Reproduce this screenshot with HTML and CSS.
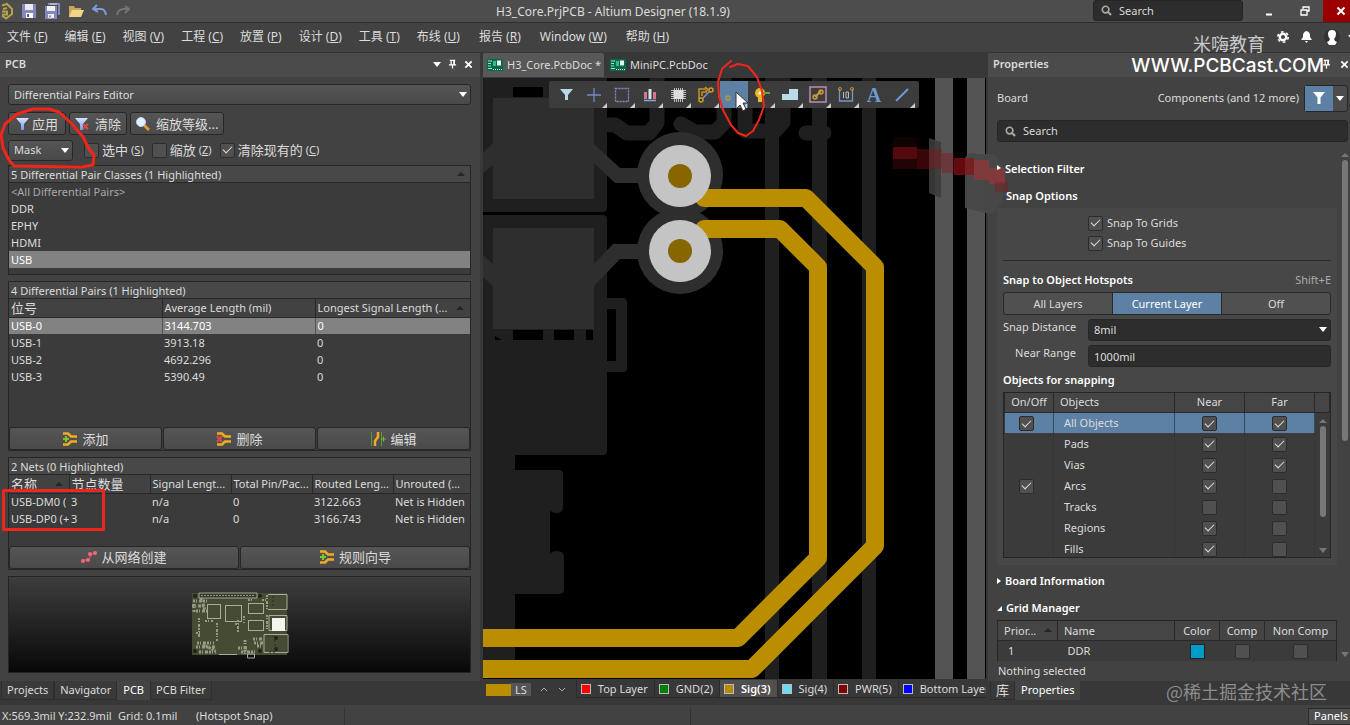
FILE: index.html
```html
<!DOCTYPE html>
<html lang="zh-CN">
<head>
<meta charset="utf-8">
<title>H3_Core.PrjPCB - Altium Designer (18.1.9)</title>
<link rel="stylesheet" href="styles.css">
</head>
<body>
<svg class="defs" aria-hidden="true">
  <symbol id="magnifier" viewBox="0 0 12 12"><circle cx="5" cy="5" r="3.6" fill="none" stroke="#aaa" stroke-width="1.8"/><path d="M7.6 7.6L11 11" stroke="#aaa" stroke-width="2.2"/></symbol>
  <symbol id="pin" viewBox="0 0 10 10"><path d="M2 1h6M3.5 1v5M6.5 1v5M7 1v5M1 6h8M5 6v4" stroke="#fff" stroke-width="1.4" fill="none"/></symbol>
  <symbol id="cross" viewBox="0 0 10 10"><path d="M1.5 1.5l7 7M8.5 1.5l-7 7" stroke="#fff" stroke-width="2" fill="none"/></symbol>
  <symbol id="pcbdoc" viewBox="0 0 16 12"><rect width="16" height="12" fill="#07694b"/><path d="M1 2h4M1 4.500h3M1 7h3M1 9.500h4" stroke="#8fe8bf"/><path d="M6 10.500h9" stroke="#d7f5e6" stroke-dasharray="1 1"/><rect x="6" y="2" width="3" height="5" fill="#39b98a"/><rect x="10" y="1.500" width="4" height="5" fill="#e4f5ec"/></symbol>
  <symbol id="pair" viewBox="0 0 16 16"><path d="M1 2.500h5l3 3h6M1 13.500h5l3-3h6" stroke="#f2ac22" stroke-width="2.500" fill="none"/></symbol>
  <symbol id="plus" viewBox="0 0 8 8"><path d="M4 1v6M1 4h6" stroke="#79c637" stroke-width="2"/></symbol>
  <linearGradient id="blueglass" x2="0" y2="1"><stop stop-color="#d6e5ff"/><stop offset="1" stop-color="#7197e6"/></linearGradient>
</svg>

<header class="titlebar">
  <div class="quick">
    <svg width="14" height="18" viewBox="0 0 14 18"><path d="M2 3.500L7 2l5 5v5l-6 4.500-4-3M3 7l4-1M2 9.500h5v3H2" fill="none" stroke="#b7a24a" stroke-width="2"/></svg>
    <button aria-label="Save"><svg width="14" height="14" viewBox="0 0 14 14"><path d="M0 0h14v14H0z" fill="#8587bd"/><path d="M3 0h8v6H3z" fill="#e9eaf5"/><path d="M4 9h7v5H4z" fill="#fff"/><path d="M5 10h2v3H5z" fill="#555b95"/></svg></button>
    <button aria-label="Save all"><svg width="16" height="16" viewBox="0 0 16 16"><path d="M4 1h11v11" fill="none" stroke="#8587bd" stroke-width="2"/><path d="M1 3h12v13H1z" fill="#8587bd"/><path d="M3 3h8v5H3zM4 11h6v4H4z" fill="#f0f0f8"/><path d="M5 12h2v3H5zM6 1h7" fill="#555b95" stroke="#ddd"/></svg></button>
    <button aria-label="Open"><svg width="16" height="14" viewBox="0 0 16 14"><path d="M1 13V2h5l1 2h6v3" fill="#c9a45b"/><path d="M1 13L4 6h12l-3 7z" fill="#f2d489"/></svg></button>
    <button aria-label="Undo"><svg width="16" height="14" viewBox="0 0 16 14"><path d="M5 1L1 5l5 3M1.500 5H9q4 0 5 6" fill="none" stroke="#7c9dd6" stroke-width="2"/></svg></button>
    <button aria-label="Redo"><svg width="14" height="12" viewBox="0 0 14 12"><path d="M9 1l4 3-4 4M13 4H8Q2 4 1 10" fill="none" stroke="#747474" stroke-width="2"/></svg></button>
  </div>
  <h1>H3_Core.PrjPCB - Altium Designer (18.1.9)</h1>
  <div class="titleright">
    <label class="search top"><svg width="11" height="11"><use href="#magnifier"/></svg><input type="text" placeholder="Search" aria-label="Search"></label>
    <div class="winbtns">
    <button aria-label="Minimize"><svg width="8" height="10"><path d="M1 8.500h6" stroke="#fff" stroke-width="2"/></svg></button>
    <button aria-label="Restore"><svg width="10" height="10"><path d="M3 3V1h6v4H7M1 4h6v5H1z" fill="none" stroke="#fff" stroke-width="1.300"/></svg></button>
    <button class="close" aria-label="Close"><svg width="10" height="10"><use href="#cross"/></svg></button>
    </div>
  </div>
</header>

<nav class="menubar">
  <button>文件 (<u>F</u>)</button><button>编辑 (<u>E</u>)</button><button>视图 (<u>V</u>)</button><button>工程 (<u>C</u>)</button><button>放置 (<u>P</u>)</button><button>设计 (<u>D</u>)</button><button>工具 (<u>T</u>)</button><button>布线 (<u>U</u>)</button><button>报告 (<u>R</u>)</button><button>Window (<u>W</u>)</button><button>帮助 (<u>H</u>)</button>
  <div class="account">
    <button aria-label="Settings"><svg width="12" height="12" viewBox="0 0 12 12"><circle cx="6" cy="6" r="3.200" fill="none" stroke="#fff" stroke-width="2.400"/><circle cx="6" cy="6" r="5.200" fill="none" stroke="#fff" stroke-width="1.600" stroke-dasharray="2.700 2.740"/></svg></button>
    <button aria-label="Notifications"><svg width="11" height="12" viewBox="0 0 11 12"><path d="M5.500 0q4 1 3.500 6l2 3H0l2-3Q1.500 1 5.500 0zM4 10h3l-1.500 2z" fill="#fff"/></svg></button>
    <button aria-label="User"><svg width="16" height="16" viewBox="0 0 16 16"><circle cx="8" cy="8" r="8" fill="#333"/><path d="M8 1q4 0 4 4 0 3-2 5l1 2 2 1-2 3H5l-2-3 2-1 1-2Q4 8 4 5q0-4 4-4z" fill="#fff"/></svg></button>
    <i class="down"></i>
  </div>
</nav>

<main class="work">
  <aside class="left">
    <div class="panelhead"><h2>PCB</h2><i class="down"></i><svg width="9" height="10"><use href="#pin"/></svg><svg width="9" height="9"><use href="#cross"/></svg></div>
    <div class="leftbody">
      <div class="pick"><select aria-label="Mode"><option>Differential Pairs Editor</option></select></div>
      <div class="actions">
        <button class="btn"><svg width="13" height="12" viewBox="0 0 13 12"><path d="M0 0h13L8 6v6H5V6z" fill="url(#blueglass)"/></svg>应用</button>
        <button class="btn"><svg width="14" height="12" viewBox="0 0 14 12"><path d="M0 0h13L8 6v6H5V6z" fill="url(#blueglass)"/><path d="M8 6l5 5M13 6l-5 5" stroke="#dd4b3e" stroke-width="2"/></svg>清除</button>
        <button class="btn"><svg width="14" height="14" viewBox="0 0 14 14"><path d="M8 8l5 5" stroke="#dc9a3c" stroke-width="3"/><circle cx="5" cy="5" r="4.500" fill="#e4f2ff" stroke="#bdd3ef"/></svg>缩放等级...</button>
      </div>
      <div class="options">
        <div class="pick mask"><select aria-label="Mask"><option>Mask</option></select></div>
        <label><input type="checkbox">选中 <small>(<u>S</u>)</small></label>
        <label><input type="checkbox">缩放 <small>(<u>Z</u>)</small></label>
        <label><input type="checkbox" checked>清除现有的 <small>(<u>C</u>)</small></label>
      </div>

      <section class="list l1">
        <h3>5 Differential Pair Classes (1 Highlighted)<i class="up"></i></h3>
        <ul><li class="dim">&lt;All Differential Pairs&gt;</li><li>DDR</li><li>EPHY</li><li>HDMI</li><li class="on">USB</li></ul>
      </section>

      <section class="list l2">
        <h3>4 Differential Pairs (1 Highlighted)</h3>
        <table class="grid pairs">
          <colgroup><col class="third"><col class="third"><col></colgroup>
          <thead><tr><th class="cjk">位号</th><th>Average Length (mil)</th><th>Longest Signal Length (...<i class="up"></i></th></tr></thead>
          <tbody>
            <tr class="on"><td>USB-0</td><td>3144.703</td><td>0</td></tr>
            <tr><td>USB-1</td><td>3913.18</td><td>0</td></tr>
            <tr><td>USB-2</td><td>4692.296</td><td>0</td></tr>
            <tr><td>USB-3</td><td>5390.49</td><td>0</td></tr>
          </tbody>
        </table>
        <div class="foot">
          <button class="btn"><svg width="16" height="16"><use href="#pair" width="16" height="16"/><use href="#plus" y="4" width="8" height="8"/></svg>添加</button>
          <button class="btn"><svg width="16" height="16"><use href="#pair" width="16" height="16"/><path d="M1 5l5 6M6 5l-5 6" stroke="#d94a48" stroke-width="2"/></svg>删除</button>
          <button class="btn"><svg width="16" height="16" viewBox="0 0 16 16"><path d="M1.500 1v14M11.500 1v14" stroke="#5f9c37"/><path d="M8 1v5L5 10v5" stroke="#f2ac22" stroke-width="2.500" fill="none"/><path d="M11 8h5M13.500 5.500v5" stroke="#79b637"/></svg>编辑</button>
        </div>
      </section>

      <section class="list l3">
        <h3>2 Nets (0 Highlighted)</h3>
        <table class="grid nets">
          <colgroup><col class="n1"><col class="n2"><col class="n3"><col class="n3"><col class="n3"><col></colgroup>
          <thead><tr><th class="cjk">名称<i class="up"></i></th><th class="cjk">节点数量</th><th>Signal Lengt...</th><th>Total Pin/Pac...</th><th>Routed Leng...</th><th>Unrouted (...</th></tr></thead>
          <tbody>
            <tr><td>USB-DM0 (</td><td>3</td><td>n/a</td><td>0</td><td>3122.663</td><td>Net is Hidden</td></tr>
            <tr><td>USB-DP0 (+</td><td>3</td><td>n/a</td><td>0</td><td>3166.743</td><td>Net is Hidden</td></tr>
          </tbody>
        </table>
        <div class="foot">
          <button class="btn"><svg width="16" height="12" viewBox="0 0 16 12"><path d="M2 9h5l4-6h4" stroke="#c9495a" stroke-width="1.500" fill="none"/><g fill="#f2697a"><circle cx="2" cy="10" r="2"/><circle cx="7" cy="9" r="2"/><circle cx="9" cy="3" r="2"/><circle cx="14" cy="2" r="2"/></g></svg>从网络创建</button>
          <button class="btn"><svg width="16" height="16"><use href="#pair" width="16" height="16"/><use href="#plus" y="4" width="8" height="8"/></svg>规则向导</button>
        </div>
      </section>

      <div class="preview">
        <svg width="98" height="68" viewBox="0 0 98 68">
          <path d="M1 1h95v62H1z" fill="#454c33"/>
          <path d="M8 1h58v5H8z" fill="#343a28" stroke="#a2a595"/>
          <path d="M10 3.500h54" stroke="#92967f" stroke-dasharray="2 1"/>
          <g fill="none" stroke="#a9ab9c"><rect x="16.500" y="12.500" width="13" height="14"/><rect x="34.500" y="13.500" width="16" height="16"/><rect x="57.500" y="11.500" width="15" height="10"/><rect x="57.500" y="28.500" width="15" height="10"/><path d="M77 2.500h19v15H77M78 23.500h18v15H78zM73 42.500h24v18H73zM56.500 62v4h7v-4z"/></g>
          <g fill="none" stroke="#969b85" stroke-width="3" stroke-dasharray="2 1 1 2 3 1"><path d="M2 9h14M1 14h12M5 19h11M3 12v8M10 6l4 12"/><path d="M8 26v20M26 31v18M5 41h5M14 29h8" stroke-width="2"/><path d="M6 51h17M5 55h20M8 60h17M12 52l14 8M47 56h10M50 60h14M54 48v14M62 47h9M63 51h10M66 54h6"/><path d="M44 32h6M47 28v13M53 24v7M57 8h5M71 8h6M76 3v14M76 23v14" stroke-width="2"/></g>
          <path d="M28 62.500h18" stroke="#a9ab9c"/>
          <g fill="#20231a"><circle cx="4" cy="4" r="2"/><circle cx="69" cy="4" r="2"/><circle cx="4" cy="59" r="2"/><circle cx="69" cy="59" r="2"/><circle cx="85" cy="46" r="2"/><circle cx="85" cy="57" r="2"/></g>
          <path d="M76 44h8v16h-8M82 4v12" fill="none" stroke="#282c20" stroke-dasharray="2 2"/>
          <path d="M81 26h13v13H81z" fill="#f4f4ee"/>
        </svg>
      </div>
    </div>
    <div class="tabs"><button>Projects</button><button>Navigator</button><button class="active">PCB</button><button>PCB Filter</button></div>
  </aside>

  <section class="editor">
    <div class="docs">
      <button class="active"><svg width="16" height="12"><use href="#pcbdoc"/></svg>H3_Core.PcbDoc *</button>
      <button><svg width="16" height="12"><use href="#pcbdoc"/></svg>MiniPC.PcbDoc</button>
    </div>
    <div class="canvas">
      <svg class="board" viewBox="483 78 503 601" preserveAspectRatio="xMinYMin slice">
        <path d="M483 78h503v601H483z" fill="#000"/>
        <g fill="#1f1f1f">
          <path d="M765 78h14v601h-14zM812 78h15v601h-15zM862 78h14v601h-14z"/>
          <path d="M483 78H607V208q0 4-4 4H483z"/>
          <path d="M483 215h120q4 0 4 4v79h16q4 0 4 4v66q0 4-4 4h-16v79q0 4-4 4h-88v15h44q4 0 4 4v32q0 7-6 7-7 0-7-4v46q0-4 7-4t7 6v32q0 5-5 5h-44v81h-32z"/>
        </g>
        <g fill="none" stroke="#1f1f1f" stroke-width="15" stroke-linejoin="round" stroke-linecap="round"><path d="M610 125h5l12 8h22l8-10V78M681 124l14 8h20l9-9V78M745 100v31h30l8-9V78M806 133h18"/></g>
        <path d="M513 87h30v10h-30zM607 309h9v52h-9zM513 330h30v10h-30zM554 330h20v10h-20zM586 330h7v10h-7zM495 336l7 4h-7z" fill="#000"/>
        <g fill="#2e2e2e">
          <path d="M493 98h101v101H493zM493 228h101v101H493zM483 153l10-10v22l-10 8zM483 255l10 9v22l-10-9zM594 144l26 24h24v15h-29l-21-20zM594 264l19-20h31v15h-24l-26 27z"/>
          <circle cx="680" cy="175" r="43"/><circle cx="680" cy="251" r="43"/>
        </g>
        <path d="M935 78h18v601h-18zM967 78h18v601h-18z" fill="#545454"/>
        <g fill="none" stroke="#bb8d00" stroke-width="18" stroke-linejoin="round" stroke-linecap="round"><path d="M704 198h102l69 69v279L752 669H470M704 229h76l38 38v291l-80 80H470"/></g>
        <g fill="#c4c4c4"><circle cx="680" cy="176" r="31"/><circle cx="680" cy="251" r="31"/></g>
        <g fill="#876600"><circle cx="680" cy="176" r="12"/><circle cx="680" cy="251" r="12"/></g>
      </svg>
      <div class="toolbar">
        <button aria-label="Filter"><svg viewBox="0 0 28 26"><path d="M8 7h13l-5 6v5h-3v-5z" fill="#b9d8e4"/></svg></button>
        <button aria-label="Move"><svg viewBox="0 0 28 26"><path d="M14 6v14M7 13h14" stroke="#7488cc" stroke-width="1.300"/><path d="M27 26v-5l-5 5z" fill="#ccc"/></svg></button>
        <button aria-label="Select area"><svg viewBox="0 0 28 26"><path d="M7.500 6.500h13v13h-13z" fill="none" stroke="#858bd0" stroke-width="1.300" stroke-dasharray="2 1"/><path d="M27 26v-5l-5 5z" fill="#ccc"/></svg></button>
        <button aria-label="Align"><svg viewBox="0 0 28 26"><path d="M8 18.500h12" stroke="#8ba5d8" stroke-width="1.500"/><path d="M8 10h3v7H8zM17 10h3v7h-3z" fill="#d77686"/><path d="M12.500 7h3v10h-3z" fill="#d4e3f0"/><path d="M27 26v-5l-5 5z" fill="#ccc"/></svg></button>
        <button aria-label="Component"><svg viewBox="0 0 28 26"><path d="M10.500 6v14M12.500 6v14M14.500 6v14M16.500 6v14M18.500 6v14M7 8.500h15M7 10.500h15M7 12.500h15M7 14.500h15M7 16.500h15" stroke="#bcbcbc"/><path d="M9.500 8h10v9h-10z" fill="#dcdcdc"/><path d="M27 26v-5l-5 5z" fill="#ccc"/></svg></button>
        <button aria-label="Route"><svg viewBox="0 0 28 26"><path d="M7 17V7h7M10 14v-4h5M13 5l3 2.500-3 2.500" fill="none" stroke="#c39424" stroke-width="1.500"/><path d="M10 17l8-8" stroke="#8391ce" stroke-width="1.500"/><g fill="#393939" stroke="#d19c20" stroke-width="1.500"><circle cx="9" cy="18" r="2"/><circle cx="19" cy="8" r="2"/></g><path d="M27 26v-5l-5 5z" fill="#ccc"/></svg></button>
        <button class="active" aria-label="Route differential pair"><svg viewBox="0 0 28 26"><circle cx="8" cy="16" r="2" fill="none" stroke="#b99b43" stroke-width="1.300"/><path d="M27 26v-5l-5 5z" fill="#ccc"/></svg></button>
        <button aria-label="Via"><svg viewBox="0 0 28 26"><circle cx="12" cy="11" r="5" fill="#e8b72a"/><path d="M12 11v9" stroke="#e8b72a" stroke-width="4"/><path d="M14 11h8" stroke="#65a832" stroke-width="2"/><circle cx="12" cy="11" r="1.500" fill="#fff"/><path d="M27 26v-5l-5 5z" fill="#ccc"/></svg></button>
        <button aria-label="Polygon"><svg viewBox="0 0 28 26"><path d="M6 12h7V7h9v11H6z" fill="#b9dce8"/><path d="M27 26v-5l-5 5z" fill="#ccc"/></svg></button>
        <button aria-label="Room"><svg viewBox="0 0 28 26"><path d="M6 5h16v15H6z" fill="none" stroke="#c487b5" stroke-width="1.500"/><path d="M11 15l6-6" stroke="#b29855" stroke-width="2"/><g fill="none" stroke="#d19c20" stroke-width="1.500"><circle cx="11" cy="15" r="2"/><circle cx="17" cy="10" r="2"/></g><path d="M27 26v-5l-5 5z" fill="#ccc"/></svg></button>
        <button aria-label="Dimension"><svg viewBox="0 0 28 26"><path d="M7.500 7v12h13V7" fill="none" stroke="#7795c6" stroke-width="1.300"/><path d="M11.500 10v6M14 10h2.500v6H14z" fill="none" stroke="#bbb"/><g fill="none" stroke="#c39424"><circle cx="8" cy="7" r="1.500"/><circle cx="20" cy="7" r="1.500"/></g><path d="M27 26v-5l-5 5z" fill="#ccc"/></svg></button>
        <button class="letter" aria-label="Text">A</button>
        <button aria-label="Line"><svg viewBox="0 0 28 26"><path d="M8 19L20 7" stroke="#6c9bd4" stroke-width="2"/><path d="M27 26v-5l-5 5z" fill="#ccc"/></svg></button>
      </div>
    </div>
    <div class="layers">
      <button class="ls"><i></i><b>LS</b></button>
      <button class="chev" aria-label="Previous layer"><svg width="8" height="5"><path d="M1 4l3-3 3 3" fill="none" stroke="#aaa"/></svg></button>
      <button class="chev" aria-label="Next layer"><svg width="8" height="5"><path d="M1 1l3 3 3-3" fill="none" stroke="#aaa"/></svg></button>
      <button class="layer"><i class="red"></i>Top Layer</button><button class="layer"><i class="green"></i>GND(2)</button><button class="layer active"><i class="gold"></i>Sig(3)</button><button class="layer"><i class="cyan"></i>Sig(4)</button><button class="layer"><i class="maroon"></i>PWR(5)</button><button class="layer"><i class="blue"></i>Bottom Layer</button>
    </div>
  </section>

  <aside class="right">
    <div class="panelhead"><h2>Properties</h2><svg width="9" height="10"><use href="#pin"/></svg><svg width="9" height="9"><use href="#cross"/></svg></div>
    <div class="scope"><span>Board</span><span class="what">Components (and 12 more)</span><div class="split"><button class="blue" aria-label="Filter"><svg width="12" height="12" viewBox="0 0 12 12"><path d="M0 0h12L7.500 5.500V12h-3V5.500z" fill="#fff"/></svg></button><button aria-label="Filter options"><i class="down"></i></button></div></div>
    <label class="search wide"><svg width="11" height="11"><use href="#magnifier"/></svg><input type="text" placeholder="Search" aria-label="Search properties"></label>
    <div class="props">
      <h3 class="fold shut">Selection Filter</h3>
      <h3 class="fold plain">Snap Options</h3>
      <div class="snapbox">
        <div class="snaps">
          <label><input type="checkbox" checked>Snap To Grids</label>
          <label><input type="checkbox" checked>Snap To Guides</label>
        </div>
        <div class="hot"><h4>Snap to Object Hotspots</h4><span>Shift+E</span></div>
        <div class="seg"><button>All Layers</button><button class="active">Current Layer</button><button>Off</button></div>
        <div class="field"><label for="dist">Snap Distance</label><div class="pick dark"><select id="dist"><option>8mil</option></select></div></div>
        <div class="field"><label for="near">Near Range</label><input id="near" type="text" value="1000mil"></div>
        <h4 class="ofs">Objects for snapping</h4>
        <div class="objects">
          <table>
            <colgroup><col class="o1"><col><col class="o3"><col class="o3"><col class="o5"></colgroup>
            <thead><tr><th>On/Off</th><th class="name">Objects</th><th>Near</th><th>Far</th><th></th></tr></thead>
            <tbody>
              <tr class="on"><td><input type="checkbox" checked aria-label="All on"></td><td class="name">All Objects</td><td><input type="checkbox" checked aria-label="All near"></td><td><input type="checkbox" checked aria-label="All far"></td><td></td></tr>
              <tr><td></td><td class="name">Pads</td><td><input type="checkbox" checked aria-label="Pads near"></td><td><input type="checkbox" checked aria-label="Pads far"></td><td></td></tr>
              <tr><td></td><td class="name">Vias</td><td><input type="checkbox" checked aria-label="Vias near"></td><td><input type="checkbox" checked aria-label="Vias far"></td><td></td></tr>
              <tr><td><input type="checkbox" checked aria-label="Arcs on"></td><td class="name">Arcs</td><td><input type="checkbox" checked aria-label="Arcs near"></td><td><input type="checkbox" aria-label="Arcs far"></td><td></td></tr>
              <tr><td></td><td class="name">Tracks</td><td><input type="checkbox" aria-label="Tracks near"></td><td><input type="checkbox" aria-label="Tracks far"></td><td></td></tr>
              <tr><td></td><td class="name">Regions</td><td><input type="checkbox" checked aria-label="Regions near"></td><td><input type="checkbox" aria-label="Regions far"></td><td></td></tr>
              <tr><td></td><td class="name">Fills</td><td><input type="checkbox" checked aria-label="Fills near"></td><td><input type="checkbox" aria-label="Fills far"></td><td></td></tr>
            </tbody>
          </table>
          <div class="bar inner"><i class="up"></i><b></b><i class="down"></i></div>
        </div>
      </div>
      <h3 class="fold shut">Board Information</h3>
      <h3 class="fold open">Grid Manager</h3>
      <table class="gridman">
        <colgroup><col class="g1"><col><col class="g3"><col class="g3"><col class="g5"></colgroup>
        <thead><tr><th class="name">Prior...<i class="up"></i></th><th class="name">Name</th><th>Color</th><th>Comp</th><th>Non Comp</th></tr></thead>
        <tbody><tr><td class="name">1</td><td class="name">DDR</td><td><i class="chip"></i></td><td><input type="checkbox" aria-label="Comp"></td><td><input type="checkbox" aria-label="Non Comp"></td></tr></tbody>
      </table>
      <div class="bar outer"><i class="up"></i><b></b><i class="down"></i></div>
    </div>
    <p class="note">Nothing selected</p>
    <div class="tabs"><button class="lib">库</button><button class="active">Properties</button></div>
  </aside>
</main>

<footer class="status"><span class="pos">X:569.3mil Y:232.9mil</span><span class="gridsize">Grid: 0.1mil</span><span class="hs">(Hotspot Snap)</span><span class="cell"></span><span class="cell rest"></span><button>Panels</button></footer>

<svg class="marks" width="1350" height="725" viewBox="0 0 1350 725" aria-hidden="true">
  <path d="M929 138l12 4v56l-12-5z" fill="#3c3c3c" opacity=".9"/>
  <path d="M965 158q4-7 12-4h17l10 15v25q-4 16-14 20l-25-6z" fill="#484848" opacity=".95"/>
  <g fill="#8c1014"><path d="M893 137h24v10h-24z" opacity=".1"/><path d="M893 147h24v12h-24z" opacity=".6"/><path d="M893 159h24v10h-24z" opacity=".25"/><path d="M917 149h25v20h-25zM942 153h12v20h-12z" opacity=".4"/><path d="M954 158h20v17h-20z" opacity=".7"/><path d="M974 160h15v20h-15zM989 168h16v16h-16z" fill="#9a3438" opacity=".7"/><path d="M995 182h13v10h-13z" opacity=".35"/></g>
  <path d="M997 165l4 3-4 2z" fill="#fff"/>
  <g fill="none" stroke="#f0261c" stroke-width="3" stroke-linejoin="round" stroke-linecap="round">
    <path d="M90 151L83 137 71 123 59 112 49 109H33L17 114 5 124 1 135 3 148 9 160 14 166 82 167 93 165 94 155 89 149"/>
    <path stroke-width="2" d="M730 67l8-3 10 2 9 11 5 14 2 15-5 14-6 11-7 5-8-3-7-8-8-15-4-13-1-15 4-13 9-8"/>
    <rect x="3.500" y="490.500" width="100" height="39"/>
  </g>
  <path d="M736 92v17l4-4 3 6 3-2-3-6h5z" fill="#fff" stroke="#333"/>
</svg>
<div class="wm name">米嗨教育</div>
<div class="wm site">WWW.PCBCast.COM</div>
<div class="wm forum">@稀土掘金技术社区</div>
</body>
</html>
```
FILE: styles.css
```css
* { box-sizing: border-box; }
html, body { height: 100%; }
body {
  margin: 0; display: flex; flex-direction: column; overflow: hidden; position: relative;
  background: #424242; color: #dcdcdc;
  font: 11px/16px "Noto Sans", "Noto Sans CJK SC", sans-serif;
}
button, input, select { font: inherit; color: inherit; }
button { background: none; border: 0; padding: 0; display: flex; align-items: center; justify-content: center; white-space: nowrap; }
h1, h2, h3, h4, p, ul { margin: 0; padding: 0; font-size: 11px; font-weight: 400; list-style: none; }
table { border-collapse: collapse; table-layout: fixed; width: 100%; }
th, td { padding: 0; font-weight: 400; text-align: left; white-space: nowrap; overflow: hidden; }
svg { flex: none; display: block; }
.defs { position: absolute; width: 0; height: 0; }
.down { border: 4px solid transparent; border-top: 5px solid #fff; border-bottom: 0; }
.up { border: 4px solid transparent; border-bottom: 4px solid #242424; border-top: 0; }

input[type=checkbox] {
  appearance: none; margin: 0; width: 15px; height: 15px; flex: none; vertical-align: middle;
  background: #505050; border: 1px solid #2c2c2c; border-radius: 2px; display: inline-grid; place-items: center;
}
input[type=checkbox]:checked::before { content: ""; width: 8px; height: 4px; margin-bottom: 3px; border: solid #ddd; border-width: 0 0 1px 1px; transform: rotate(-45deg); }

.titlebar { display: grid; grid-template-columns: 4fr auto 5fr; height: 23px; background: #4d4d4d; border-bottom: 1px solid #2e2e2e; align-items: center; }
.titlebar h1 { font-size: 12px; padding-top: 2px; }
.quick { display: flex; align-items: center; gap: 8px; }
.titleright { display: flex; justify-content: flex-end; height: 22px; }
.winbtns { display: flex; margin-left: 8px; }
.winbtns button { width: 36px; }
.winbtns .close { width: 27px; background: #9b0000; padding-left: 8px; }
.search { display: flex; align-items: center; background: #2d2d2d; border: 1px solid #262626; border-radius: 3px; }
.search input { border: 0; background: none; width: 100%; padding: 0; outline: 0; }
.search input::placeholder { color: #d8d8d8; opacity: 1; }
.search.top { width: 150px; height: 21px; padding-left: 7px; gap: 7px; }

.menubar { height: 29px; display: flex; gap: 17px; padding: 0 0 1px 7px; background: #424242; font-size: 12px; }
.menubar > button:nth-child(n+9) { padding-left: 2px; }
.account { margin-left: auto; display: flex; align-items: center; gap: 12px; }
.account .down { margin: 0 -6px 0 -4px; }

.work { flex: 1; display: flex; min-height: 0; background: #383838; }
.left { flex: 0 0 480px; display: flex; flex-direction: column; background: #424242; border-top: 1px solid #333; min-width: 0; }
.panelhead { height: 24px; flex: none; background: #4b4b4b; display: flex; align-items: center; gap: 7px; padding: 0 7px 2px 5px; }
.panelhead h2 { font-weight: 600; margin-right: auto; }
.leftbody { flex: 1; padding: 7px 9px 8px 8px; display: flex; flex-direction: column; min-height: 0; }
.pick { position: relative; height: 21px; }
.pick::after { content: ""; position: absolute; right: 4px; top: 8px; border: 4px solid transparent; border-top: 5px solid #fff; border-bottom: 0; pointer-events: none; }
.pick select { appearance: none; width: 100%; height: 100%; padding: 0 5px; background: linear-gradient(#555, #494949); border: 1px solid #272727; border-radius: 3px; }
.actions { display: flex; gap: 3px; margin-top: 7px; }
.actions .btn { height: 23px; padding: 0 7px; }
.btn { gap: 3px; font-size: 13px; background: linear-gradient(#555, #4a4a4a); border: 1px solid #272727; border-radius: 3px; }
.actions .btn + .btn { padding: 0 5px; gap: 6px; }
.options { display: flex; align-items: center; gap: 8px; margin: 4px 0; height: 22px; font-size: 13px; }
.options label { display: flex; align-items: center; gap: 3px; }
.options small { font-size: 11px; }
.mask { width: 65px; font-size: 11px; margin-right: 3px; }
.list { border: 1px solid #262626; background: #3b3b3b; display: flex; flex-direction: column; min-height: 0; margin-bottom: 6px; }
.l1 { flex: 110 1 0; } .l2 { flex: 171 1 0; } .l3 { flex: 112 1 0; }
.list h3 { height: 17px; flex: none; line-height: 17px; padding: 0 5px 0 2px; background: #484848; border-bottom: 1px solid #282828; display: flex; align-items: center; justify-content: space-between; }
.list li { height: 17px; line-height: 17px; padding-left: 2px; }
.dim { color: #a8a8a8; }
li.on, .grid tr.on { background: #828282; color: #fff; }
.grid th, .grid td { height: 17px; line-height: 16px; padding-left: 2px; }
.grid th { height: 18px; background: #424242; border-bottom: 1px solid #282828; position: relative; }
.grid th + th { border-left: 1px solid #282828; }
.grid tr.on td + td { border-left: 1px solid #555; }
.grid th .up { position: absolute; right: 6px; top: 7px; }
.grid .cjk { font-size: 13px; }
.third { width: 153px; }
.n1 { width: 60px; } .n2, .n3 { width: 81px; }
.foot { margin-top: auto; display: flex; gap: 1px; }
.foot .btn { flex: 1; height: 23px; gap: 4px; }
.preview { flex: 93 1 0; min-height: 0; padding-top: 4px; border: 1px solid #242424; background: linear-gradient(#3d3d3d, #080808); display: grid; place-items: center; }
.tabs { flex: none; height: 24px; background: #383838; display: flex; align-items: flex-start; padding-left: 1px; }
.tabs button { height: 19px; padding: 0 5px; border: 1px solid #2e2e2e; border-top: 0; background: #3a3a3a; }
.tabs .active { background: #444; border-color: #444; color: #fff; }

.editor { flex: 1; min-width: 0; display: flex; flex-direction: column; padding-left: 3px; }
.docs { height: 26px; display: flex; padding: 1px 0; }
.docs button { gap: 4px; padding: 0 3px 0 4px; margin-right: 2px; border-radius: 2px 2px 0 0; }
.docs .active { background: #585858; }
.canvas { flex: 1; min-height: 0; position: relative; overflow: hidden; background: #000; }
.board { width: 100%; height: 100%; }
.toolbar { position: absolute; left: 66px; top: 3px; display: flex; padding: 0 3px; background: #3c3c3c; border-radius: 2px; }
.toolbar button { width: 28px; height: 27px; }
.toolbar svg { width: 28px; height: 26px; }
.toolbar .active { background: #5d81a5; }
.toolbar .letter { font: bold 20px/24px "Liberation Serif", serif; color: #6c9bd4; }
.layers { flex: none; height: 26px; display: flex; align-items: flex-start; padding-top: 1px; overflow: hidden; }
.layers button { flex: none; }
.ls { height: 13px; margin: 3px 4px 0 3px; }
.ls i { width: 25px; height: 12px; background: #bb8d00; }
.ls b { font-weight: 400; line-height: 13px; padding: 0 4px; background: #555; }
.chev { width: 18px; height: 18px; }
.layer { height: 18px; padding: 0 6px 0 4px; gap: 7px; border: solid #2b2b2b; border-width: 0 1px 1px 0; }
.chev + .layer { margin-left: 5px; border-left-width: 1px; }
.layer i { width: 10px; height: 10px; border: 1px solid #bbb; }
.layer.active { background: #505050; font-weight: 600; color: #fff; }
.red { background: #f00; } .green { background: #008000; } .gold { background: #b58b00; } .cyan { background: #6adcf4; } .maroon { background: #800000; } .layer .blue { background: #00f; }

.right { flex: 0 0 362px; margin-left: 2px; display: flex; flex-direction: column; background: #424242; border-top: 1px solid #333; min-width: 0; }
.right .panelhead { padding-right: 1px; gap: 9px; }
.scope { display: flex; align-items: center; height: 28px; margin: 7px 2px 8px 9px; flex: none; }
.what { margin-left: auto; padding-right: 5px; }
.split { display: flex; border: 1px solid #262626; border-radius: 3px; background: #4c4c4c; height: 27px; }
.split button { width: 14px; }
.split .blue { width: 28px; background: #5d81a5; }
.search.wide { height: 22px; flex: none; margin: 0 2px 0 9px; padding-left: 7px; gap: 7px; }
.props { flex: 1; min-height: 0; overflow: hidden; position: relative; margin-top: 7px; padding: 10px 13px 0 9px; }
.fold { font-weight: 600; color: #fff; height: 20px; line-height: 20px; display: flex; align-items: center; gap: 4px; margin-bottom: 7px; }
.fold::before { content: ""; border: 3px solid transparent; border-left: 4px solid #fff; border-right: 0; }
.fold.plain::before { border-left-color: transparent; }
.fold.plain { margin-bottom: 2px; gap: 5px; }
.fold.open::before { border: solid transparent; border-width: 0 0 5px 5px; border-bottom-color: #fff; }
.fold.open { margin-bottom: 2px; }
.snapbox { background: #474747; padding: 7px 6px; margin-bottom: 6px; }
.snaps { display: flex; flex-direction: column; gap: 4px; padding: 0 0 9px 85px; border-bottom: 1px solid #2c2c2c; }
.snaps label { display: flex; align-items: center; gap: 4px; }
.hot { display: flex; justify-content: space-between; margin: 11px 0 4px; }
.hot span { color: #aaa; }
h4 { font-weight: 600; color: #fff; }
.seg { display: flex; height: 23px; border: 1px solid #292929; border-radius: 3px; background: #505050; }
.seg button { flex: 1; }
.seg button + button { border-left: 1px solid #292929; }
.seg .active { background: #5d81a5; color: #fff; }
.field { display: flex; margin-top: 4px; height: 22px; }
.field label { width: 73px; margin-right: 12px; text-align: right; white-space: nowrap; }
.field .pick, .field input { flex: 1; min-width: 0; height: 22px; }
.field input, .dark select { background: #2d2d2d; border: 1px solid #272727; border-radius: 3px; padding: 0 5px; }
.ofs { margin: 5px 0 4px; }
.objects { height: 166px; overflow: hidden; position: relative; border: 1px solid #252525; background: #3b3b3b; }
.objects th, .objects td, .gridman th, .gridman td { height: 21px; line-height: 16px; text-align: center; }
.objects th { height: 19px; }
.gridman th { height: 20px; }
.objects td + td { border-left: 1px solid #363636; }
.objects th, .gridman th { background: #454545; border: 1px solid #292929; border-top: 0; }
.objects .on td { background: #5d81a5; border-color: #34495c; }
.objects .on td:last-child { background: #3b3b3b; }
.objects .name { text-align: left; padding-left: 10px; }
.objects th.name { padding-left: 6px; }
.o1 { width: 49px; } .o3 { width: 70px; } .o5 { width: 15px; }
.objects td:first-child { padding-right: 4px; }
.bar { position: absolute; right: 1px; display: flex; flex-direction: column; align-items: center; gap: 3px; width: 8px; }
.bar b { flex: 1; width: 6px; border-radius: 3px; background: #777; }
.bar .up { border-bottom-color: #777; } .bar .down { border-top-color: #777; }
.inner { top: 26px; bottom: 4px; right: 3px; }
.inner b { margin-bottom: 28px; }
.outer { top: 4px; bottom: 4px; }
.outer b { margin-bottom: 208px; }
.gridman { border: 1px solid #252525; background: #3b3b3b; }
.gridman .name { text-align: left; padding-left: 6px; }
.gridman td.name { padding-left: 10px; }
.gridman .up { display: inline-block; margin: 0 0 3px 8px; }
.g1 { width: 60px; } .g3 { width: 45px; } .g5 { width: 72px; }
.chip { display: inline-block; width: 15px; height: 15px; background: #009cc8; border: 1px solid #222; vertical-align: middle; }
.note { padding: 2px 10px; flex: none; height: 20px; }
.right .tabs { padding-left: 2px; }
.right .lib { font-size: 13px; }

.status { flex: none; height: 20px; display: flex; align-items: center; padding: 2px 0 0 2px; background: #424242; }
.pos { width: 116px; } .gridsize { width: 78px; } .hs { width: 148px; }
.cell { align-self: stretch; flex: 347; border-left: 1px solid #333; }
.cell.rest { flex: 620; }
.status button { height: 17px; padding: 0 2px 0 5px; background: #4e4e4e; border: 1px solid #2b2b2b; border-right: 0; color: #fff; }

.marks { position: absolute; left: 0; top: 0; pointer-events: none; }
.wm { position: absolute; pointer-events: none; white-space: nowrap; }
.wm.name { right: 85px; top: 31px; font: 18px/24px "Noto Sans CJK SC", sans-serif; color: #c9c9c9; }
.wm.site { right: 26px; top: 54px; font: 500 19px/24px Inter, sans-serif; color: #fff; }
.wm.forum { right: 23px; bottom: 22px; font: 18px/24px "Noto Sans CJK SC", sans-serif; color: #8d8d8d; }
```
